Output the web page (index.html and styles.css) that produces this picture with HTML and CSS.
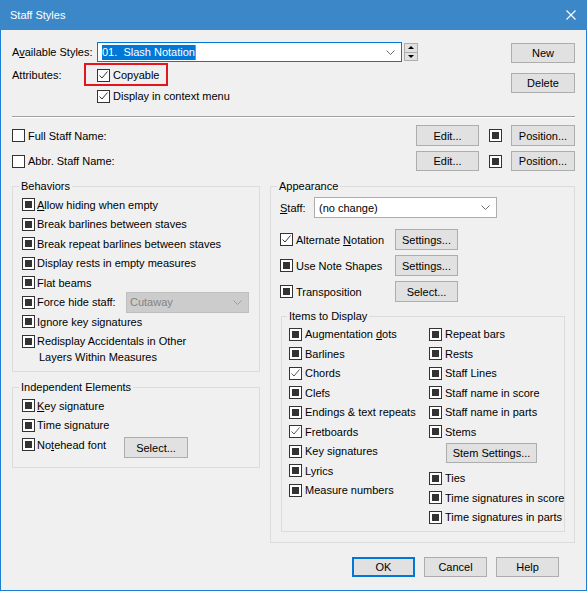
FILE: index.html
```html
<!DOCTYPE html>
<html>
<head>
<meta charset="utf-8">
<title>Staff Styles</title>
<link rel="stylesheet" href="styles.css">
</head>
<body>
<div class="window">
  <div class="titlebar">
    <span class="title">Staff Styles</span>
    <svg class="close" width="10" height="10" viewBox="0 0 10 10"><path d="M0.5 0.5L9.5 9.5M9.5 0.5L0.5 9.5" stroke="#fff" stroke-width="1.1" fill="none"/></svg>
  </div>
  <div class="content">
    <div class="top">
      <div class="top-main">
        <div class="row r-styles">
          <span class="w85">A<u>v</u>ailable Styles:</span>
          <div class="combo-edit"><span class="sel">01.&nbsp; Slash Notation</span><svg class="chev" width="9" height="5" viewBox="0 0 9 5"><path d="M0.5 0.5L4.5 4.5L8.5 0.5" stroke="#6d6d6d" fill="none"/></svg></div>
          <div class="spin"><span class="sp up"><i class="tri-up"></i></span><span class="sp"><i class="tri-down"></i></span></div>
        </div>
        <div class="row r-attr">
          <span class="w85">Attributes:</span>
          <span class="check copyable"><span class="cb"><svg width="11" height="11" viewBox="0 0 11 11"><path d="M1.5 5.5L4 8L9.5 1.5" stroke="#333" fill="none"/></svg></span>Copyable</span>
        </div>
        <div class="row r-ctx">
          <span class="w85"></span>
          <span class="check"><span class="cb"><svg width="11" height="11" viewBox="0 0 11 11"><path d="M1.5 5.5L4 8L9.5 1.5" stroke="#333" fill="none"/></svg></span>Display in context menu</span>
        </div>
      </div>
      <div class="top-side">
        <div class="btn b-new">New</div>
        <div class="btn b-del">Delete</div>
      </div>
    </div>

    <div class="sep"></div>

    <div class="nrow n1">
      <span class="check"><span class="cb"></span>Full Staff Name:</span>
      <div class="btn b-edit">Edit...</div>
      <span class="cb ind mid"></span>
      <div class="btn b-pos">Position...</div>
    </div>
    <div class="nrow n2">
      <span class="check"><span class="cb"></span>Abbr. Staff Name:</span>
      <div class="btn b-edit">Edit...</div>
      <span class="cb ind mid"></span>
      <div class="btn b-pos">Position...</div>
    </div>

    <div class="cols">
      <div class="left">
        <fieldset class="group behaviors">
          <legend>Behaviors</legend>
          <div class="r19"><span class="cb ind"></span><span><u>A</u>llow hiding when empty</span></div>
          <div class="r19"><span class="cb ind"></span><span>Break barlines between staves</span></div>
          <div class="r19"><span class="cb ind"></span><span>Break repeat barlines between staves</span></div>
          <div class="r19"><span class="cb ind"></span><span>Display rests in empty measures</span></div>
          <div class="r19"><span class="cb ind"></span><span>Flat beams</span></div>
          <div class="r19"><span class="cb ind"></span><span class="w-force">Force hide staff:</span>
            <div class="combo-dis"><span>Cutaway</span><svg class="chev" width="9" height="5" viewBox="0 0 9 5"><path d="M0.5 0.5L4.5 4.5L8.5 0.5" stroke="#9c9c9c" fill="none"/></svg></div>
          </div>
          <div class="r19"><span class="cb ind"></span><span>Ignore key signatures</span></div>
          <div class="rwrap"><span class="cb ind"></span><span class="wraptext"><span>Redisplay Accidentals in Other</span><span class="l2">Layers Within Measures</span></span></div>
        </fieldset>

        <fieldset class="group indep">
          <legend>Independent Elements</legend>
          <div class="r19"><span class="cb ind"></span><span><u>K</u>ey signature</span></div>
          <div class="r19"><span class="cb ind"></span><span>Time signature</span></div>
          <div class="r19 top-al"><span class="cb ind"></span><span class="w-note">No<u>t</u>ehead font</span>
            <div class="btn b-select">Select...</div>
          </div>
        </fieldset>
      </div>

      <fieldset class="group appearance">
        <legend>Appearance</legend>
        <div class="arow staff">
          <span class="w-staff"><u>S</u>taff:</span>
          <div class="combo-list"><span>(no change)</span><svg class="chev" width="9" height="5" viewBox="0 0 9 5"><path d="M0.5 0.5L4.5 4.5L8.5 0.5" stroke="#6d6d6d" fill="none"/></svg></div>
        </div>
        <div class="arow a1">
          <span class="cb"><svg width="11" height="11" viewBox="0 0 11 11"><path d="M1.5 5.5L4 8L9.5 1.5" stroke="#333" fill="none"/></svg></span><span class="w-app">Alternate <u>N</u>otation</span>
          <div class="btn b-set">Settings...</div>
        </div>
        <div class="arow">
          <span class="cb ind"></span><span class="w-app">Use Note Shapes</span>
          <div class="btn b-set">Settings...</div>
        </div>
        <div class="arow">
          <span class="cb ind"></span><span class="w-app">Transposition</span>
          <div class="btn b-set">Select...</div>
        </div>

        <fieldset class="group items">
          <legend>Items to Display</legend>
          <div class="igrid">
            <div class="icol">
              <div class="r19"><span class="cb ind"></span><span>Augmentation <u>d</u>ots</span></div>
              <div class="r19"><span class="cb ind"></span><span>Barlines</span></div>
              <div class="r19"><span class="cb"><svg width="11" height="11" viewBox="0 0 11 11"><path d="M1.5 5.5L4 8L9.5 1.5" stroke="#555" fill="none"/></svg></span><span>Chords</span></div>
              <div class="r19"><span class="cb ind"></span><span>Clefs</span></div>
              <div class="r19"><span class="cb ind"></span><span>Endings &amp; text repeats</span></div>
              <div class="r19"><span class="cb"><svg width="11" height="11" viewBox="0 0 11 11"><path d="M1.5 5.5L4 8L9.5 1.5" stroke="#555" fill="none"/></svg></span><span>Fretboards</span></div>
              <div class="r19"><span class="cb ind"></span><span>Key signatures</span></div>
              <div class="r19"><span class="cb ind"></span><span>Lyrics</span></div>
              <div class="r19"><span class="cb ind"></span><span>Measure numbers</span></div>
            </div>
            <div class="icol">
              <div class="r19"><span class="cb ind"></span><span>Repeat bars</span></div>
              <div class="r19"><span class="cb ind"></span><span>Rests</span></div>
              <div class="r19"><span class="cb ind"></span><span>Staff Lines</span></div>
              <div class="r19"><span class="cb ind"></span><span>Staff name in score</span></div>
              <div class="r19"><span class="cb ind"></span><span>Staff name in parts</span></div>
              <div class="r19"><span class="cb ind"></span><span>Stems</span></div>
              <div class="btn b-stem">Stem Settings...</div>
              <div class="r19 ties"><span class="cb ind"></span><span>Ties</span></div>
              <div class="r19"><span class="cb ind"></span><span>Time signatures in score</span></div>
              <div class="r19"><span class="cb ind"></span><span>Time signatures in parts</span></div>
            </div>
          </div>
        </fieldset>
      </fieldset>
    </div>

    <div class="footer">
      <div class="btn b-ok">OK</div>
      <div class="btn">Cancel</div>
      <div class="btn">Help</div>
    </div>
  </div>
</div>
</body>
</html>
```

FILE: styles.css
```css
body {
  margin: 0;
}

.window {
  width: 587px;
  height: 591px;
  box-sizing: border-box;
  background: #f0f0f0;
  border: 1px solid #1c7fd3;
  border-top: 0;
  font-family: "Liberation Sans", Arial, sans-serif;
  font-size: 11px;
  color: #000;
  white-space: nowrap;
  display: flex;
  flex-direction: column;
}

u {
  text-decoration: underline;
  text-underline-offset: 1px;
}

.titlebar {
  height: 30px;
  flex: none;
  margin: 0 -1px;
  background: #3c87c8;
  color: #fff;
  display: flex;
  align-items: center;
  padding: 0 11px 0 10px;
  font-size: 11px;
}

.close {
  margin-left: auto;
}

.content {
  flex: 1;
  display: flex;
  flex-direction: column;
  padding: 12px 11px 0 11px;
}

/* generic controls */
.btn {
  box-sizing: border-box;
  width: 63px;
  height: 20px;
  background: #e1e1e1;
  border: 1px solid #adadad;
  display: flex;
  align-items: center;
  justify-content: center;
  flex: none;
}

.cb {
  width: 13px;
  height: 13px;
  box-sizing: border-box;
  border: 1px solid #333;
  background: #fff;
  flex: none;
  position: relative;
  margin-right: 3px;
  display: flex;
}

.cb svg {
  display: block;
}

.cb.ind::after {
  content: "";
  position: absolute;
  left: 2px;
  top: 2px;
  width: 7px;
  height: 7px;
  background: #333;
}

.check {
  display: flex;
  align-items: center;
  position: relative;
}

.chev {
  margin-left: auto;
  flex: none;
}

/* top section */
.top {
  display: flex;
}

.top-main {
  display: flex;
  flex-direction: column;
}

.row {
  display: flex;
  align-items: center;
  height: 20px;
}

.w85 {
  width: 85px;
  flex: none;
}

.r-attr {
  margin-top: 3px;
}

.r-ctx {
  margin-top: 1px;
}

.combo-edit {
  width: 305px;
  height: 20px;
  box-sizing: border-box;
  border: 1px solid #0078d7;
  background: #fff;
  display: flex;
  align-items: center;
  padding: 0 6px 0 4px;
}

.sel {
  background: #0078d7;
  color: #fff;
  line-height: 15px;
  border-right: 1px solid #f07a1a;
}

.spin {
  margin-left: 2px;
  width: 14px;
  height: 18px;
  display: flex;
  flex-direction: column;
}

.sp {
  flex: 1;
  box-sizing: border-box;
  border: 1px solid #adadad;
  background: #e1e1e1;
  display: flex;
  align-items: center;
  justify-content: center;
}

.sp.up {
  border-bottom: 0;
}

.tri-up {
  width: 0;
  height: 0;
  border-left: 3px solid transparent;
  border-right: 3px solid transparent;
  border-bottom: 3px solid #000;
}

.tri-down {
  width: 0;
  height: 0;
  border-left: 3px solid transparent;
  border-right: 3px solid transparent;
  border-top: 3px solid #000;
}

.copyable::after {
  content: "";
  position: absolute;
  left: -13px;
  right: -9px;
  top: -6px;
  bottom: -4px;
  border: 2px solid #e3161d;
}

.top-side {
  margin-left: auto;
  display: flex;
  flex-direction: column;
}

.b-new,
.b-del {
  width: 64px;
}

.b-new {
  margin-top: 1px;
}

.b-del {
  margin-top: 10px;
}

.sep {
  margin-top: 10px;
  border-top: 1px solid #a0a0a0;
  border-bottom: 1px solid #fff;
}

/* staff name rows */
.nrow {
  display: flex;
  align-items: center;
  height: 21px;
}

.n1 {
  margin-top: 7px;
}

.n2 {
  margin-top: 5px;
  height: 20px;
}

.b-edit {
  margin-left: auto;
  height: 100%;
}

.cb.mid {
  margin-left: 10px;
  margin-right: 9px;
}

.b-pos {
  width: 64px;
  height: 100%;
}

/* columns */
.cols {
  display: flex;
  align-items: flex-start;
  gap: 10px;
  margin-top: 8px;
}

.left {
  width: 248px;
  flex: none;
  display: flex;
  flex-direction: column;
}

.group {
  margin: 0;
  min-width: 0;
  border: 1px solid #dcdcdc;
  padding: 2px 9px 6px 9px;
}

.group legend {
  padding: 0 2px;
  margin-left: -3px;
  line-height: 14px;
}

.left .cb {
  margin-right: 2px;
}

.r19 {
  height: 19.5px;
  display: flex;
  align-items: center;
}

.w-force {
  width: 89px;
  flex: none;
}

.combo-dis {
  box-sizing: border-box;
  width: 123px;
  height: 21px;
  flex: none;
  background: #cccccc;
  border: 1px solid #bfbfbf;
  color: #838383;
  display: flex;
  align-items: center;
  padding: 0 6px 0 3px;
}

.rwrap {
  display: flex;
  align-items: flex-start;
  padding-top: 1.5px;
}

.rwrap .cb {
  margin-top: 1.5px;
}

.wraptext {
  display: flex;
  flex-direction: column;
  line-height: 16px;
}

.wraptext .l2 {
  padding-left: 2px;
}

.indep {
  margin-top: 8px;
  padding-bottom: 12px;
}

.w-note {
  width: 87px;
  flex: none;
}

.top-al .b-select {
  width: 64px;
  height: 21px;
  align-self: flex-start;
  margin-top: 2px;
}

/* appearance */
.appearance {
  width: 305px;
  box-sizing: border-box;
  flex: none;
  padding: 4px 9px 10px 9px;
}

.arow {
  display: flex;
  align-items: center;
  height: 21px;
  margin-top: 5px;
}

.arow.staff {
  margin-top: 0;
}

.arow.a1 {
  margin-top: 11px;
}

.w-staff {
  width: 34px;
  flex: none;
}

.combo-list {
  box-sizing: border-box;
  width: 183px;
  height: 21px;
  background: #fff;
  border: 1px solid #adadad;
  display: flex;
  align-items: center;
  padding: 0 6px 0 4px;
}

.w-app {
  width: 99px;
  flex: none;
}

.b-set {
  height: 21px;
}

.items {
  margin: 7px 0 0 1px;
  padding: 1.25px 7px 4.25px 7px;
}

.items legend {
  margin-left: -2px;
}

.igrid {
  display: grid;
  grid-template-columns: 140px minmax(0, 1fr);
}

.icol {
  display: flex;
  flex-direction: column;
  min-width: 0;
}

.b-stem {
  width: 91px;
  margin: 1.75px 0 0 17px;
}

.ties {
  margin-top: 5.25px;
}

/* footer */
.footer {
  display: flex;
  justify-content: flex-end;
  gap: 9px;
  margin-top: 14px;
  padding-right: 16px;
}

.b-ok {
  border: 2px solid #0078d7;
}
```
